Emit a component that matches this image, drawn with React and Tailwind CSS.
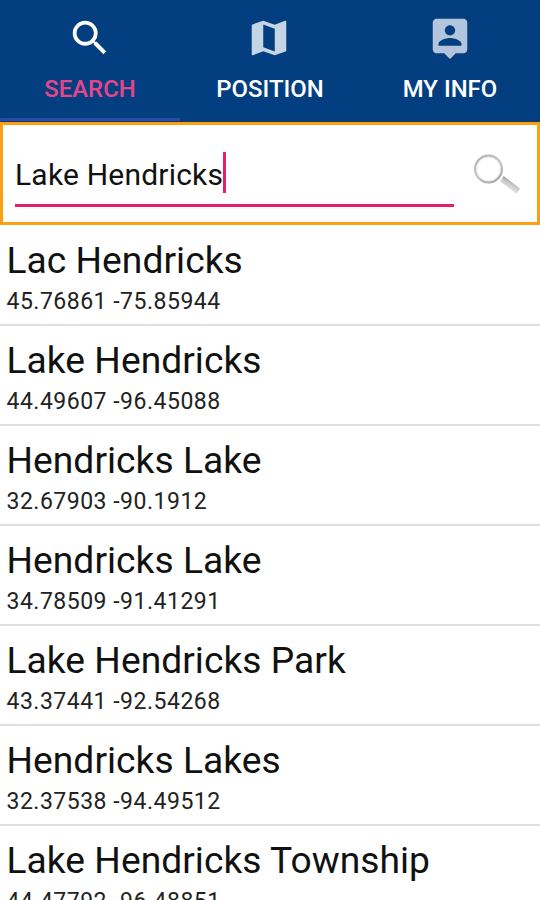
import React, { useState } from 'react';
import { MdSearch, MdMap } from 'react-icons/md';

function PersonBubble({ className }) {
  return (
    <svg className={className} viewBox="0 0 24 24" fill="currentColor">
      <path d="M19 2H5c-1.100 0-2 .9-2 2v14c0 1.100.9 2 2 2h4l3 3 3-3h4c1.100 0 2-.9 2-2V4c0-1.100-.9-2-2-2zm-7 3.300c1.490 0 2.700 1.210 2.700 2.700s-1.210 2.700-2.700 2.700S9.300 9.490 9.300 8s1.210-2.700 2.700-2.700zM18 16H6v-.9c0-2 4-3.100 6-3.100s6 1.100 6 3.100v.9z" />
    </svg>
  );
}

const TABS = [
  { id: 'search', label: 'SEARCH', Icon: MdSearch, iconClass: 'text-white' },
  { id: 'position', label: 'POSITION', Icon: MdMap, iconClass: 'text-[#c4d5e5] mr-[3px]' },
  { id: 'info', label: 'MY INFO', Icon: PersonBubble, iconClass: 'text-[#b2c5dc]' },
];

const PLACES = [
  { name: 'Lac Hendricks', coords: '45.76861 -75.85944' },
  { name: 'Lake Hendricks', coords: '44.49607 -96.45088' },
  { name: 'Hendricks Lake', coords: '32.67903 -90.1912' },
  { name: 'Hendricks Lake', coords: '34.78509 -91.41291' },
  { name: 'Lake Hendricks Park', coords: '43.37441 -92.54268' },
  { name: 'Hendricks Lakes', coords: '32.37538 -94.49512' },
  { name: 'Lake Hendricks Township', coords: '44.47792 -96.48851' },
];

function Magnifier() {
  return (
    <svg width="50" height="44" viewBox="0 0 50 44" fill="none">
      <defs>
        <linearGradient id="handle" x1="40" y1="30" x2="36" y2="37" gradientUnits="userSpaceOnUse">
          <stop offset="0" stopColor="#9c9c9c" />
          <stop offset="0.4" stopColor="#c8c8c8" />
          <stop offset="1" stopColor="#e2e2e2" />
        </linearGradient>
        <linearGradient id="rim" x1="8" y1="6" x2="24" y2="32" gradientUnits="userSpaceOnUse">
          <stop offset="0" stopColor="#b4b4b4" />
          <stop offset="0.5" stopColor="#c6c6c6" />
          <stop offset="1" stopColor="#a2a2a2" />
        </linearGradient>
      </defs>
      <circle cx="16.5" cy="18" r="13.4" stroke="url(#rim)" strokeWidth="2.2" />
      <circle cx="16.5" cy="18" r="12" stroke="#e6e6e6" strokeWidth="1" />
      <path d="M31.500 25L48 37.500L44.500 43L28 30.500Z" fill="url(#handle)" />
    </svg>
  );
}

export default function App() {
  const [active, setActive] = useState('search');

  return (
    <div className="flex h-[900px] w-[540px] flex-col overflow-hidden bg-white font-['Roboto',sans-serif] text-[#111]">
      {/* Tabs */}
      <nav className="flex h-[122px] shrink-0 border-b border-[#173463] bg-[#033f80]">
        {TABS.map(({ id, label, Icon, iconClass }) => (
          <button
            key={id}
            onClick={() => setActive(id)}
            className={`flex flex-1 flex-col items-center border-b-[3px] pt-[15px] ${active === id ? 'border-[#2a4ba6] text-[#e5468a]' : 'border-transparent text-white'}`}
          >
            <Icon className={`size-[46px] ${iconClass}`} />
            <span className="mt-[12px] text-[23.9px] leading-8 font-medium whitespace-nowrap">{label}</span>
          </button>
        ))}
      </nav>

      {/* Search field */}
      <div className="flex h-[103px] shrink-0 border-[3.5px] border-[#fba010] pl-3">
        <div className="mt-[27px] flex h-[55px] w-[439px] items-start border-b-[3px] border-[#e91e6b]">
          <span className="mt-[5px] text-[30px] leading-9 tracking-[0.2px] whitespace-nowrap">Lake Hendricks</span>
          <span className="h-[41px] w-[3px] bg-[#e91e6b]" />
        </div>
        <button className="mt-[26px] ml-[18px] self-start">
          <Magnifier />
        </button>
      </div>

      {/* Results */}
      <ul className="pt-px">
        {PLACES.map((place, i) => (
          <li key={i} className="h-[100px] border-b-2 border-[#dfdfdf] pt-3 pl-[6.5px]">
            <p className="text-[37.2px] leading-[44px] tracking-[0.03px] whitespace-nowrap">{place.name}</p>
            <p className="mt-[6px] text-[23px] leading-7 tracking-[0.5px] whitespace-nowrap text-[#222]">{place.coords}</p>
          </li>
        ))}
      </ul>
    </div>
  );
}
